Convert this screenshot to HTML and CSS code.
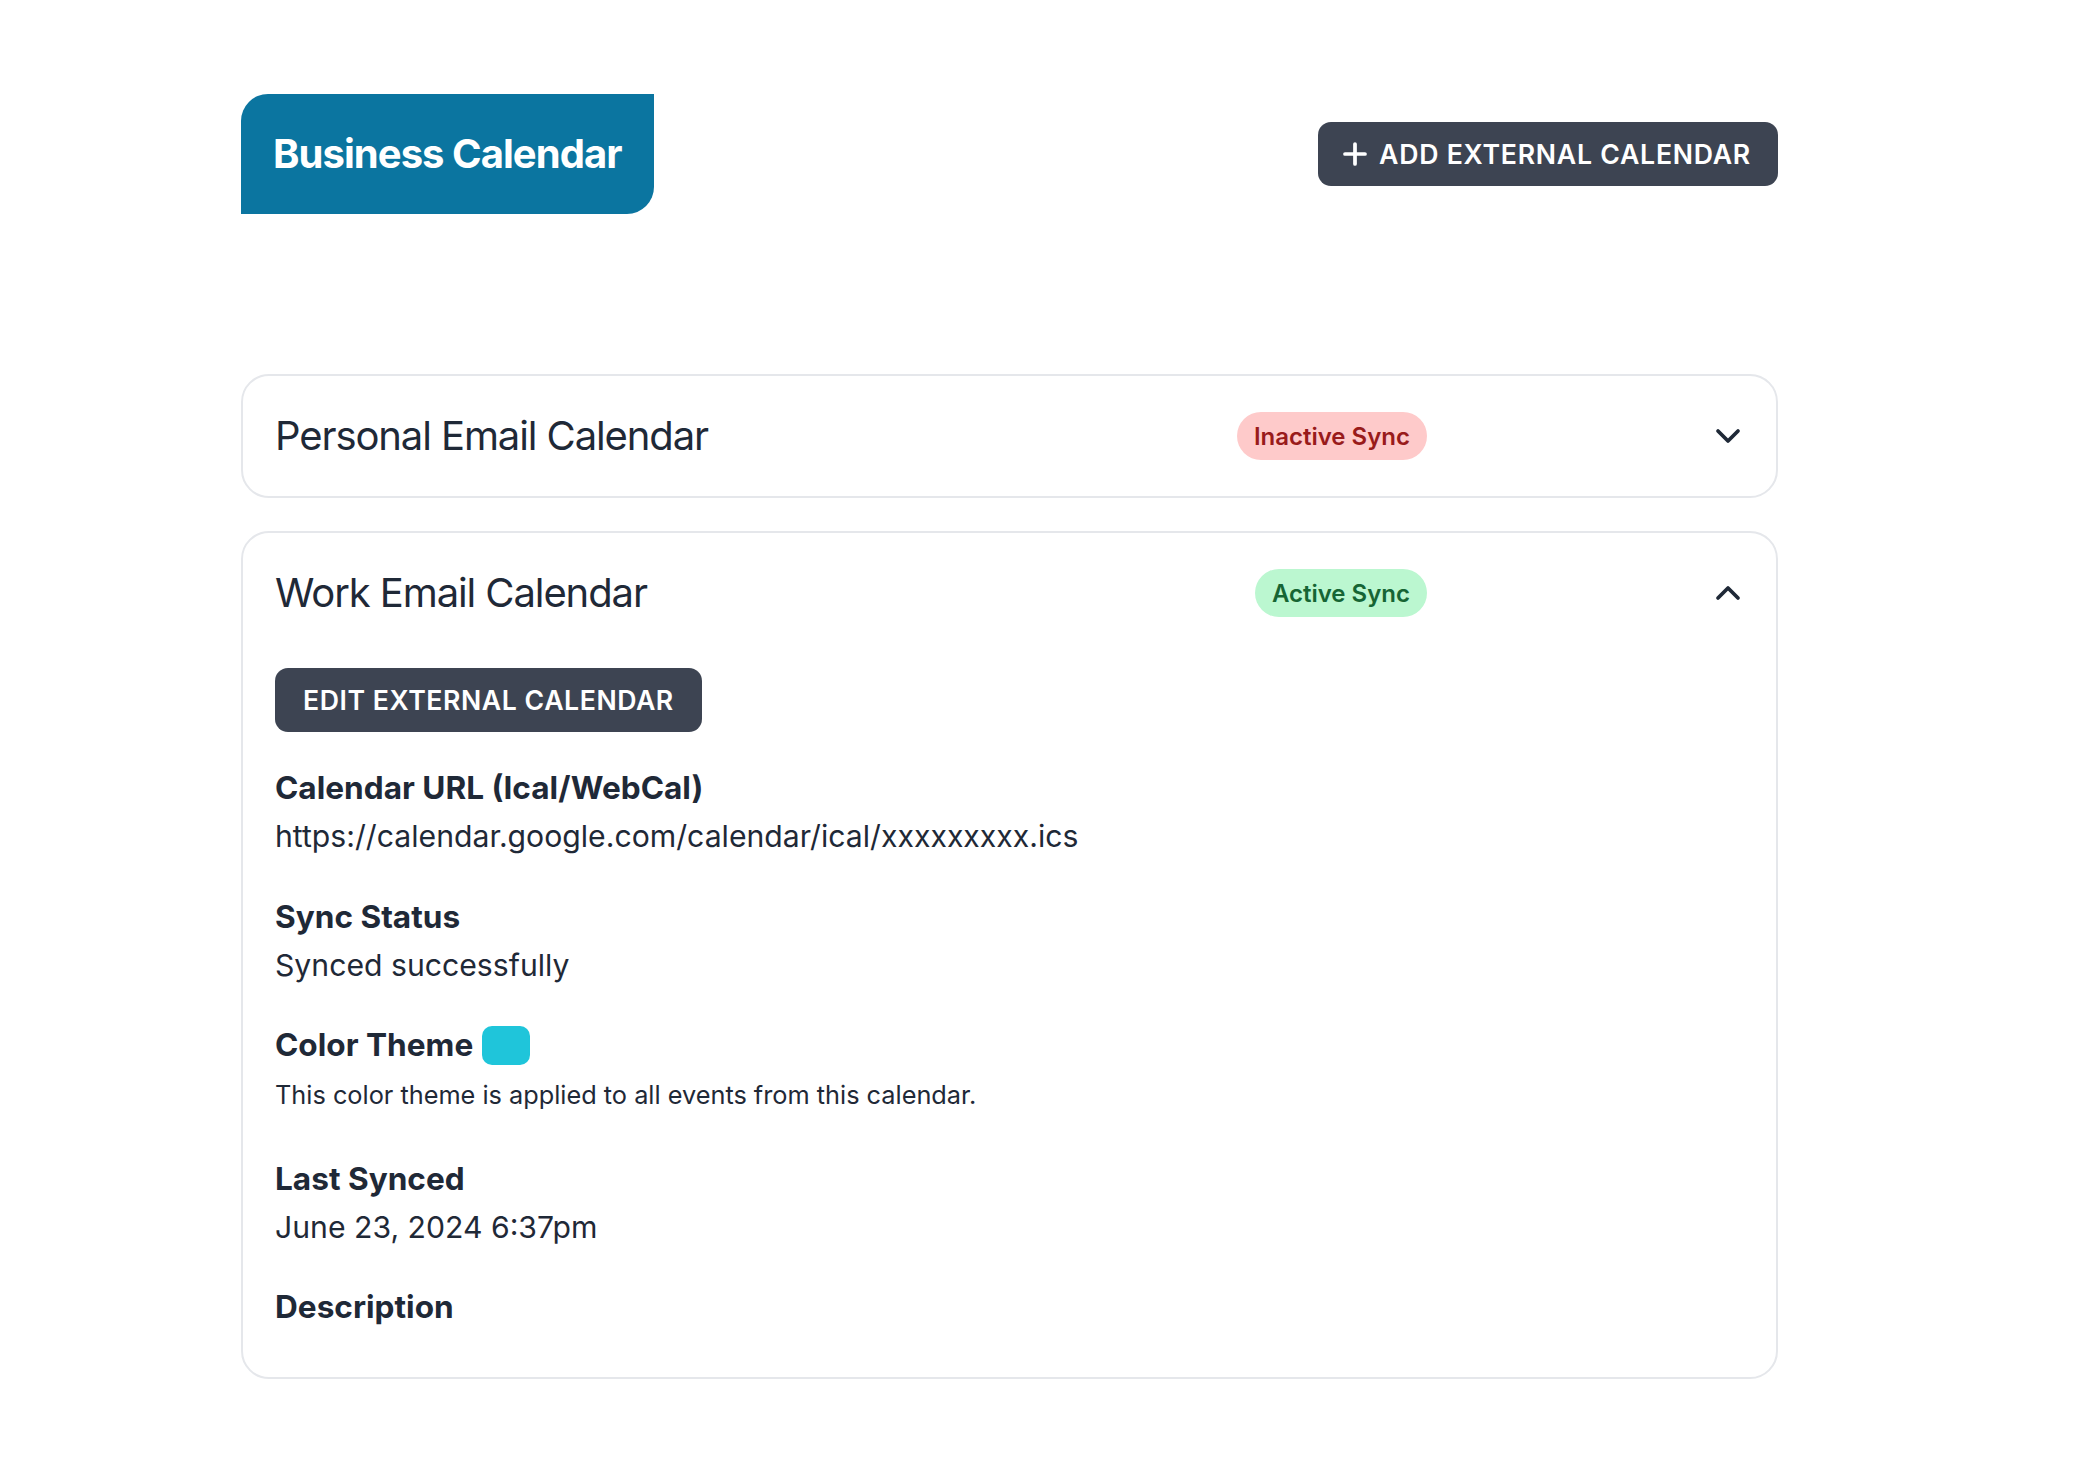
FILE: index.html
```html
<!DOCTYPE html>
<html lang="en">
<head>
<meta charset="utf-8">
<title>Business Calendar</title>
<link rel="stylesheet" href="styles.css">
</head>
<body>
<div class="page">
  <header class="top">
    <h1 class="brand">Business Calendar</h1>
    <button class="btn btn-add" type="button">
      <svg class="btn-icon" viewBox="0 0 24 24" fill="none" stroke="currentColor" stroke-width="2.8" stroke-linecap="round" stroke-linejoin="round"><path d="M12 4.5v15m7.5-7.5h-15"/></svg>
      <span>ADD EXTERNAL CALENDAR</span>
    </button>
  </header>

  <section class="list">
    <article class="card">
      <div class="card-head">
        <h2 class="card-title">Personal Email Calendar</h2>
        <span class="badge badge-inactive">Inactive Sync</span>
        <svg class="chev" viewBox="0 0 24 24" fill="none" stroke="currentColor" stroke-width="2.8" stroke-linecap="round" stroke-linejoin="round"><path d="m19.5 8.25-7.5 7.5-7.5-7.5"/></svg>
      </div>
    </article>

    <article class="card">
      <div class="card-head">
        <h2 class="card-title">Work Email Calendar</h2>
        <span class="badge badge-active">Active Sync</span>
        <svg class="chev" viewBox="0 0 24 24" fill="none" stroke="currentColor" stroke-width="2.8" stroke-linecap="round" stroke-linejoin="round"><path d="m4.5 15.75 7.5-7.5 7.5 7.5"/></svg>
      </div>
      <div class="card-body">
        <button class="btn btn-edit" type="button">EDIT EXTERNAL CALENDAR</button>
        <dl class="fields">
          <div class="field">
            <dt class="label">Calendar URL (Ical/WebCal)</dt>
            <dd class="value">https://calendar.google.com/calendar/ical/xxxxxxxxx.ics</dd>
          </div>
          <div class="field">
            <dt class="label">Sync Status</dt>
            <dd class="value">Synced successfully</dd>
          </div>
          <div class="field">
            <dt class="label label-row">Color Theme <span class="swatch"></span></dt>
            <dd class="value value-small">This color theme is applied to all events from this calendar.</dd>
          </div>
          <div class="field">
            <dt class="label">Last Synced</dt>
            <dd class="value">June 23, 2024 6:37pm</dd>
          </div>
          <div class="field">
            <dt class="label">Description</dt>
            <dd class="value value-empty"></dd>
          </div>
        </dl>
      </div>
    </article>
  </section>
</div>
</body>
</html>
```

FILE: styles.css
```css
* { box-sizing: border-box; }

html, body {
  margin: 0;
  padding: 0;
  background: #ffffff;
}

body {
  font-family: "Inter", "Liberation Sans", sans-serif;
  color: #1f2937;
}

.page {
  width: 1537px;
  margin-left: 241px;
  padding-top: 94px;
  padding-bottom: 80px;
}

.top {
  display: flex;
  align-items: center;
  justify-content: space-between;
}

.brand {
  margin: 0;
  background: #0b75a0;
  color: #ffffff;
  font-size: 40px;
  line-height: 56px;
  font-weight: 700;
  letter-spacing: -0.95px;
  padding: 32px 32px;
  border-radius: 27px 0 27px 0;
}

.btn {
  font-family: inherit;
  border: none;
  background: #3d4452;
  color: #ffffff;
  font-weight: 600;
  font-size: 26.67px;
  letter-spacing: 0.55px;
  border-radius: 13px;
  height: 64px;
  display: inline-flex;
  align-items: center;
  cursor: pointer;
}

.btn-add {
  padding: 0 27px 0 21px;
  gap: 8px;
  letter-spacing: 0.75px;
}

.btn-icon {
  width: 32px;
  height: 32px;
  display: block;
}

.list {
  margin-top: 160px;
  display: flex;
  flex-direction: column;
  gap: 33px;
}

.card {
  border: 2px solid #e5e7eb;
  border-radius: 28px;
  padding: 32px;
}

.card-head {
  display: flex;
  align-items: center;
}

.card-title {
  flex: 1;
  margin: 0;
  font-size: 40px;
  line-height: 56px;
  font-weight: 400;
  letter-spacing: -1.1px;
}

.badge {
  height: 48px;
  display: inline-flex;
  align-items: center;
  padding: 0 17px;
  border-radius: 24px;
  font-size: 24px;
  font-weight: 600;
  margin-right: 285px;
}

.badge-inactive {
  background: #fecaca;
  color: #991b1b;
}

.badge-active {
  background: #bbf7d0;
  color: #166534;
}

.chev {
  width: 32px;
  height: 32px;
  color: #1f2937;
  display: block;
}

.card-body {
  padding-top: 47px;
}

.btn-edit {
  padding: 0 28px;
}

.fields {
  margin: 36px 0 0;
  display: flex;
  flex-direction: column;
  gap: 40.5px;
}

.field { margin: 0; }

.label {
  font-size: 31.6px;
  line-height: 40px;
  font-weight: 700;
}

.label-row {
  display: flex;
  align-items: center;
  gap: 9px;
}

.swatch {
  width: 48px;
  height: 39px;
  border-radius: 10px;
  background: #1fc5da;
  display: inline-block;
}

.value {
  margin: 8px 0 0;
  font-size: 30.2px;
  line-height: 40px;
  font-weight: 400;
}

.value-small {
  margin-top: 12px;
  margin-bottom: 5px;
  font-size: 25.3px;
  line-height: 36px;
}

.value-empty {
  height: 10px;
  margin-top: 8px;
}
```
